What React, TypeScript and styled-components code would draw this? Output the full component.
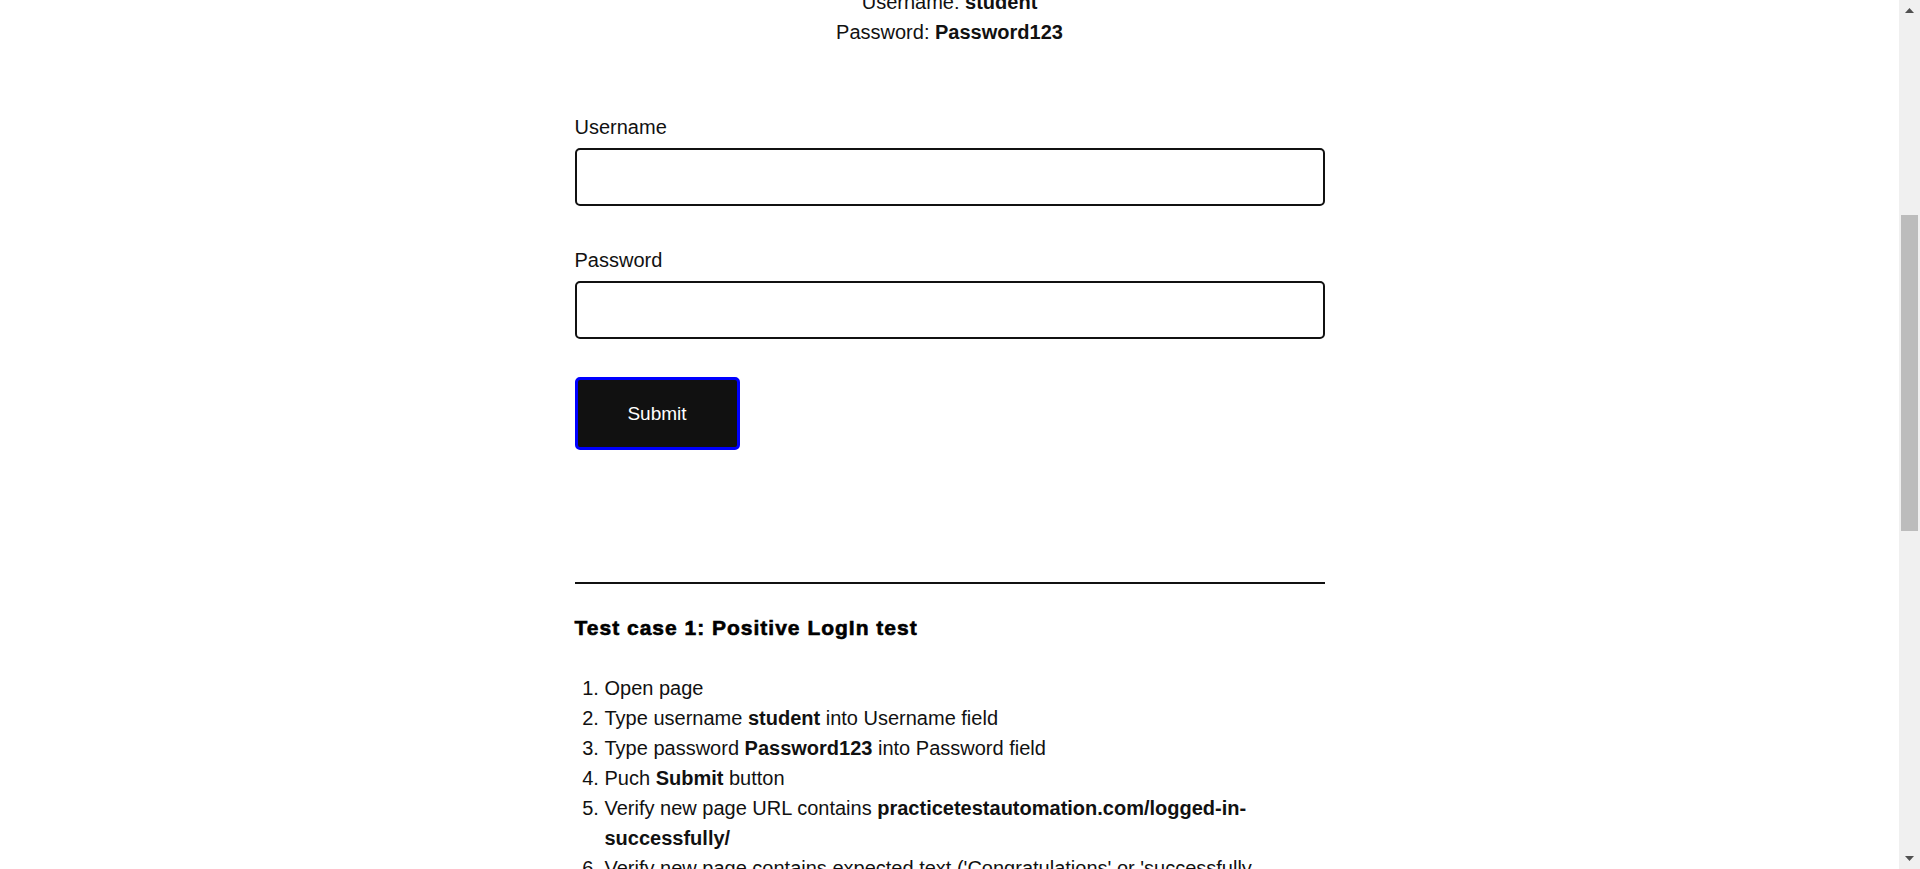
import React, { useLayoutEffect, useRef } from "react";
import styled, { createGlobalStyle } from "styled-components";

const GlobalStyle = createGlobalStyle`
  html, body {
    margin: 0;
    padding: 0;
    height: 100%;
    overflow: hidden;
    background: #ffffff;
  }
  body {
    font-family: "Liberation Sans", Arial, sans-serif;
    color: #111111;
  }
  * { box-sizing: border-box; }
`;

const Viewport = styled.div`
  display: flex;
  height: 100vh;
  width: 100vw;
`;

const Main = styled.main`
  position: relative;
  flex: 1;
  min-width: 0;
  overflow: hidden;
`;

const Article = styled.article`
  width: 750px;
  margin: 0 auto;
  padding: 40px 0 200px;
  font-size: 20px;
  line-height: 30px;
`;

const PageTitle = styled.h2`
  margin: 0 0 24px;
  font-size: 36px;
  line-height: 44px;
  font-weight: 700;
`;

const Paragraph = styled.p`
  margin: 0 0 24px;
`;

const Credentials = styled.p`
  margin: 0 0 65px;
  text-align: center;
`;

const Form = styled.form`
  display: flex;
  flex-direction: column;
`;

const Field = styled.div<{ $spacing: number }>`
  display: flex;
  flex-direction: column;
  gap: 6px;
  margin-bottom: ${(p) => p.$spacing}px;
`;

const Label = styled.label`
  display: block;
  font-size: 20px;
  line-height: 30px;
  color: #111111;
`;

const Input = styled.input`
  width: 100%;
  height: 58px;
  border: 2px solid #111111;
  border-radius: 5px;
  padding: 0 14px;
  font-family: inherit;
  font-size: 20px;
  background: #ffffff;
  outline: none;
`;

const SubmitButton = styled.button`
  align-self: flex-start;
  width: 165px;
  height: 73px;
  border: 3px solid #0000ff;
  border-radius: 5px;
  background: #111111;
  color: #ffffff;
  font-family: "Liberation Sans", Arial, sans-serif;
  font-size: 19px;
  cursor: pointer;
`;

const Rule = styled.hr`
  margin: 132px 0 0;
  border: none;
  height: 2px;
  background: #111111;
`;

const CaseTitle = styled.h4`
  margin: 31px 0 33px;
  font-size: 21px;
  line-height: 25px;
  font-weight: 700;
  letter-spacing: 1px;
  color: #000000;
  -webkit-text-stroke: 0.6px #000000;
`;

const Steps = styled.ol`
  margin: 0;
  padding: 0 40px 0 30px;
  font-size: 20px;
  line-height: 30px;
`;

const Step = styled.li``;

const Scrollbar = styled.div`
  width: 21px;
  flex: 0 0 21px;
  height: 100%;
  background: #f0f0f0;
  display: flex;
  flex-direction: column;
`;

const ArrowButton = styled.div`
  height: 21px;
  flex: 0 0 21px;
  display: flex;
  align-items: center;
  justify-content: center;
`;

const Track = styled.div<{ $offset: number }>`
  flex: 1;
  padding: ${(p) => p.$offset}px 2px 0;
`;

const Thumb = styled.div<{ $size: number }>`
  height: ${(p) => p.$size}px;
  background: #bcbcbc;
`;

const Arrow = ({ down }: { down?: boolean }) => (
  <svg width="9" height="5" viewBox="0 0 9 5" style={{ transform: down ? "rotate(180deg)" : undefined }}>
    <polygon points="0,5 4.5,0 9,5" fill="#505050" />
  </svg>
);

export default function App() {
  const mainRef = useRef<HTMLElement>(null);
  const credRef = useRef<HTMLParagraphElement>(null);

  useLayoutEffect(() => {
    if (mainRef.current && credRef.current) {
      mainRef.current.scrollTop = credRef.current.offsetTop + 13;
    }
  }, []);

  return (
    <>
      <GlobalStyle />
      <Viewport>
        <Main ref={mainRef}>
          <Article>
            <PageTitle>Test login</PageTitle>
            <Paragraph>
              This is a simple Login page. Students can use this page to practice writing simple
              positive and negative LogIn tests. Login functionality is something that most of the
              test automation engineers need to automate.
            </Paragraph>
            <Paragraph>Use next credentials to execute Login:</Paragraph>
            <Credentials ref={credRef}>
              Username: <b>student</b>
              <br />
              Password: <b>Password123</b>
            </Credentials>

            <Form onSubmit={(e) => e.preventDefault()}>
              <Field $spacing={39}>
                <Label htmlFor="username">Username</Label>
                <Input id="username" name="username" type="text" />
              </Field>
              <Field $spacing={38}>
                <Label htmlFor="password">Password</Label>
                <Input id="password" name="password" type="password" />
              </Field>
              <SubmitButton type="submit">Submit</SubmitButton>
            </Form>

            <Rule />

            <CaseTitle>Test case 1: Positive LogIn test</CaseTitle>
            <Steps>
              <Step>Open page</Step>
              <Step>
                Type username <b>student</b> into Username field
              </Step>
              <Step>
                Type password <b>Password123</b> into Password field
              </Step>
              <Step>
                Puch <b>Submit</b> button
              </Step>
              <Step>
                Verify new page URL contains <b>practicetestautomation.com/logged-in-successfully/</b>
              </Step>
              <Step>
                Verify new page contains expected text ('Congratulations' or 'successfully logged in')
              </Step>
              <Step>
                Verify button <b>Log out</b> is displayed on the new page
              </Step>
            </Steps>
          </Article>
        </Main>
        <Scrollbar>
          <ArrowButton>
            <Arrow />
          </ArrowButton>
          <Track $offset={194}>
            <Thumb $size={316} />
          </Track>
          <ArrowButton>
            <Arrow down />
          </ArrowButton>
        </Scrollbar>
      </Viewport>
    </>
  );
}
